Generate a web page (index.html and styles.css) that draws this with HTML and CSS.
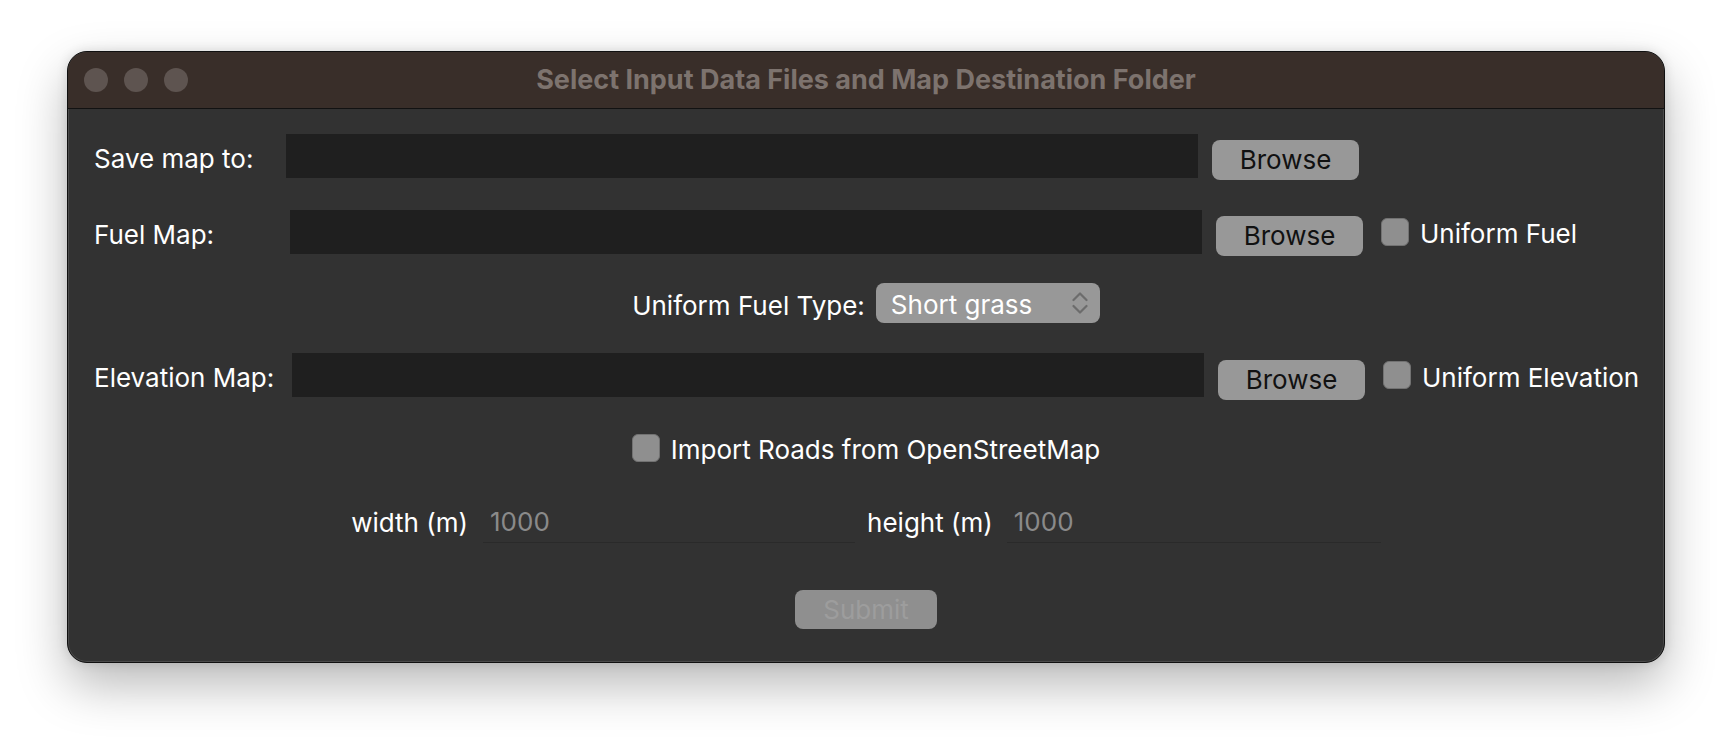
FILE: index.html
```html
<!DOCTYPE html>
<html lang="en">
<head>
<meta charset="utf-8">
<title>Select Input Data Files and Map Destination Folder</title>
<link rel="stylesheet" href="styles.css">
</head>
<body>
<div class="stage">
  <div class="window">
    <div class="titlebar">
      <div class="lights">
        <span class="light"></span>
        <span class="light"></span>
        <span class="light"></span>
      </div>
      <div class="title">Select Input Data Files and Map Destination Folder</div>
      <div class="spacer"></div>
    </div>
    <div class="content">
      <div class="file-row row-save">
        <span class="label label-save">Save map to:</span>
        <div class="path"></div>
        <button class="btn">Browse</button>
      </div>

      <div class="file-row row-fuel">
        <span class="label label-fuel">Fuel Map:</span>
        <div class="path"></div>
        <button class="btn">Browse</button>
        <label class="check">
          <span class="box"></span>
          <span class="check-text">Uniform Fuel</span>
        </label>
      </div>

      <div class="center-row row-type">
        <span class="label type-label">Uniform Fuel Type:</span>
        <div class="select">
          <span class="select-text">Short grass</span>
          <svg class="chev" width="16" height="22" viewBox="0 0 16 22" aria-hidden="true">
            <path d="M1.5 8 L8 1.5 L14.5 8" fill="none" stroke="#6c6c6c" stroke-width="2.2" stroke-linecap="round" stroke-linejoin="round"/>
            <path d="M1.5 14 L8 20.5 L14.5 14" fill="none" stroke="#6c6c6c" stroke-width="2.2" stroke-linecap="round" stroke-linejoin="round"/>
          </svg>
        </div>
      </div>

      <div class="file-row row-elev">
        <span class="label label-elev">Elevation Map:</span>
        <div class="path"></div>
        <button class="btn">Browse</button>
        <label class="check">
          <span class="box"></span>
          <span class="check-text">Uniform Elevation</span>
        </label>
      </div>

      <div class="center-row row-roads">
        <label class="check roads">
          <span class="box"></span>
          <span class="check-text">Import Roads from OpenStreetMap</span>
        </label>
      </div>

      <div class="center-row row-size">
        <span class="size-label">width (m)</span>
        <div class="entry entry-w"><span class="placeholder">1000</span></div>
        <span class="size-label size-label-h">height (m)</span>
        <div class="entry entry-h"><span class="placeholder">1000</span></div>
      </div>

      <div class="center-row row-submit">
        <button class="submit" disabled>Submit</button>
      </div>
    </div>
  </div>
</div>
</body>
</html>
```

FILE: styles.css
```css
html, body {
  margin: 0;
  padding: 0;
  background: #ffffff;
}

body {
  font-family: Inter, "Liberation Sans", Arial, sans-serif;
  width: 1734px;
  height: 748px;
  overflow: hidden;
}

.stage {
  padding: 51px 0 0 67px;
}

.window {
  box-sizing: border-box;
  width: 1598px;
  height: 612px;
  border: 1px solid #101010;
  border-radius: 20px;
  overflow: hidden;
  background: #323232;
  box-shadow: inset 0 0 0 1px #4a4a4a, 0 22px 50px rgba(0, 0, 0, 0.28), 0 0 12px rgba(0, 0, 0, 0.12);
}

.titlebar {
  height: 56px;
  background: #392e29;
  border-bottom: 1px solid #121212;
  display: grid;
  grid-template-columns: 1fr auto 1fr;
  align-items: center;
}

.lights {
  display: flex;
  gap: 16px;
  padding-left: 16px;
}

.light {
  width: 24px;
  height: 24px;
  border-radius: 50%;
  background: #5e5450;
}

.title {
  font-size: 27px;
  font-weight: 700;
  color: #7d736e;
  white-space: nowrap;
  line-height: 54px;
}

.content {
  padding-top: 25px;
  color: #ffffff;
}

.label {
  font-size: 26px;
  line-height: 44px;
  padding-top: 3px;
  color: #ffffff;
  white-space: nowrap;
}

.file-row {
  display: flex;
  align-items: flex-start;
  padding-left: 26px;
}

.row-save { height: 46px; }
.row-fuel { height: 46px; margin-top: 30px; }
.row-elev { height: 47px; margin-top: 30px; }

.label-save { width: 192px; }
.label-fuel { width: 196px; }
.label-elev { width: 198px; }

.path {
  width: 912px;
  height: 44px;
  background: #1f1f1f;
  flex: none;
}

.btn {
  margin: 6px 0 0 14px;
  width: 147px;
  height: 40px;
  padding: 0;
  border: none;
  border-radius: 8px;
  background: #989898;
  color: #111111;
  font-family: inherit;
  font-size: 26px;
  line-height: 40px;
  flex: none;
}

.row-elev .btn { margin-top: 7px; }

.check {
  display: flex;
  align-items: center;
  gap: 11px;
  margin: 8px 0 0 18px;
  height: 28px;
}

.box {
  box-sizing: border-box;
  width: 28px;
  height: 28px;
  border-radius: 6px;
  background: #8f8f8f;
  border: 1px solid #727272;
  flex: none;
}

.check-text {
  font-size: 26px;
  line-height: 28px;
  padding-top: 4px;
  color: #ffffff;
  white-space: nowrap;
}

.row-elev .check-text { padding-top: 6px; }

.center-row {
  display: flex;
  justify-content: center;
  align-items: flex-start;
}

.row-type {
  height: 40px;
  margin-top: 27px;
  gap: 11px;
}

.type-label {
  line-height: 40px;
  padding-top: 3px;
}

.select {
  box-sizing: border-box;
  width: 224px;
  height: 40px;
  border-radius: 8px;
  background: #989898;
  display: flex;
  align-items: center;
  justify-content: space-between;
  padding: 0 12px 0 15px;
}

.select-text {
  font-size: 26px;
  line-height: 40px;
  padding-top: 3px;
  color: #ffffff;
  white-space: nowrap;
}

.chev {
  display: block;
}

.row-roads {
  height: 28px;
  margin-top: 34px;
}

.row-roads .check {
  margin: 0;
}

.row-size {
  height: 40px;
  margin-top: 41px;
}

.size-label {
  font-size: 26px;
  line-height: 39px;
  color: #ffffff;
  white-space: nowrap;
  margin-right: 15px;
}

.size-label-h {
  margin-left: 12px;
  margin-right: 14px;
}

.entry {
  box-sizing: border-box;
  height: 40px;
  border-bottom: 1px solid #2a2a2a;
  padding-left: 7px;
}

.entry-w { width: 372px; }
.entry-h { width: 374px; }

.placeholder {
  font-size: 26px;
  line-height: 38px;
  color: #8a8a8a;
}

.row-submit {
  height: 39px;
  margin-top: 47px;
}

.submit {
  width: 142px;
  height: 39px;
  padding: 0;
  border: none;
  border-radius: 8px;
  background: #8f8f8f;
  color: #9d9d9d;
  font-family: inherit;
  font-size: 26px;
  line-height: 39px;
}
```
